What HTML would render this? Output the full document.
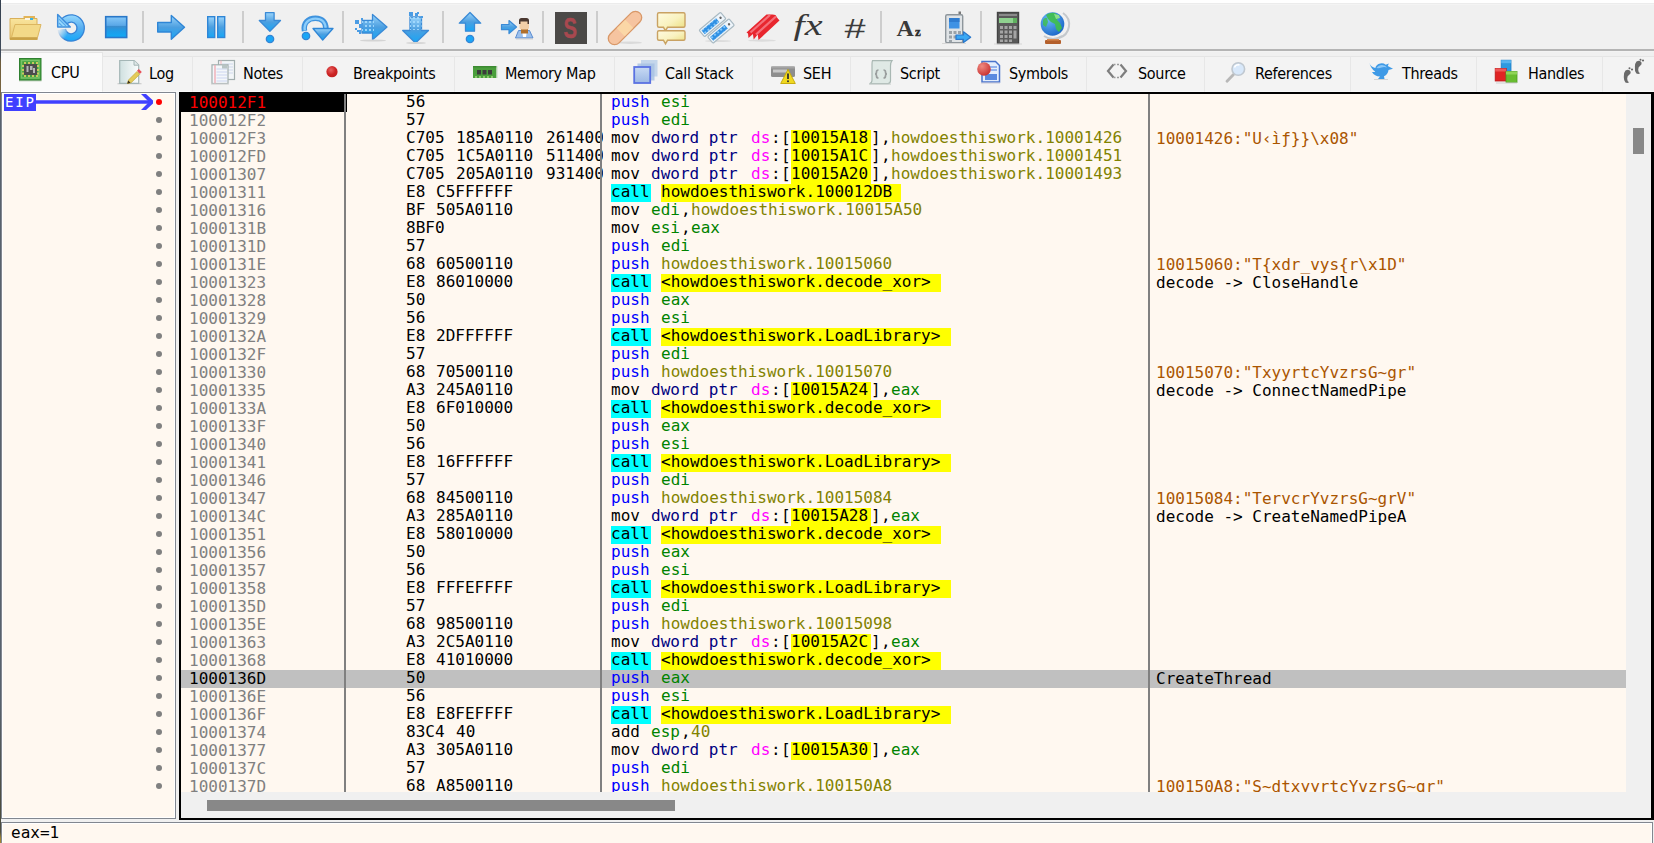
<!DOCTYPE html>
<html lang="en">
<head>
<meta charset="utf-8">
<title>x32dbg - CPU</title>
<style>
*{box-sizing:border-box;margin:0;padding:0}
html,body{width:1654px;height:843px;overflow:hidden;background:#f0f0f0}
body{position:relative;font-family:"DejaVu Sans Condensed","DejaVu Sans","Liberation Sans",sans-serif;font-size:16px;color:#000}
#win{position:absolute;left:0;top:0;width:1654px;height:843px;overflow:hidden;background:#f0f0f0}
#edge{position:absolute;left:0;top:0;width:1px;height:843px;background:linear-gradient(#34404f 0,#3f4b5a 55px,#6d5c3c 62px,#7a6640 95px,#58626e 104px,#58626e 700px,#4c4c3e 812px,#4c4c3e 832px,#a08432 838px,#a08432 100%)}
#topband{position:absolute;left:1px;top:0;width:1653px;height:5px;background:#fff;border-bottom:1px solid #f4f4f4}
#topband i{position:absolute;left:0;top:3px;width:100%;height:1px;background:#ececec}
#toolbar{position:absolute;left:1px;top:5px;width:1653px;height:44px;background:#f0f0f0}
#tbline{position:absolute;left:1px;top:49px;width:1653px;height:2px;background:#b4b4b4}
#tbline2{position:absolute;left:1px;top:51px;width:1653px;height:1px;background:#f3f3f3}
.ico{position:absolute;display:block;overflow:visible}
.sep{position:absolute;top:11px;width:2px;height:32px;background:#cfcfcf}
/* tabs */
#tabs{position:absolute;left:1px;top:52px;width:1653px;height:40px;background:#f0f0f0}
.tab{position:absolute;top:4px;height:36px;background:#f3f3f3;border-left:1px solid #e7e7e7;border-top:1px solid #e5e5e5;border-bottom:1px solid #f9f9f9}
.tab.cur{top:0;height:40px;background:#fafafa;border:0;border-top:1px solid #e5e5e5;border-right:1px solid #e5e5e5;border-bottom:1px solid #fff}
.tab span{position:absolute;top:7px;line-height:20px;white-space:nowrap;letter-spacing:-0.3px;font-size:16px}
.tab.cur span{top:10px}
/* side bar */
#side{position:absolute;left:1px;top:92px;width:175px;height:727px;border:1px solid #828790;background:#fff8f0;box-shadow:inset 0 0 0 1px #fff}
#eip{position:absolute;left:2px;top:1px;width:32px;height:17px;background:#4040ff;color:#fff;font:14px/17px "DejaVu Sans Mono","Liberation Mono",monospace;letter-spacing:1.8px;text-align:left;padding-left:1px;overflow:hidden;white-space:nowrap}
.dot{position:absolute;left:154px;width:6px;height:6px;border-radius:50%;background:#808080}
.dot.bp{background:#ff0000}
/* disassembly */
#dis{position:absolute;left:179px;top:92px;width:1475px;height:728px;background:#000}
#view{position:absolute;left:2px;top:2px;width:1445px;height:698px;background:#fff8f0;overflow:hidden;font:16px/18px "DejaVu Sans Mono","Liberation Mono",monospace}
.row{position:absolute;left:0;width:1445px;height:18px}
.row.sel{background:#c0c0c0}
.c{position:absolute;top:0;height:18px;overflow:hidden;white-space:pre}
.a{left:0;width:166px;padding-left:8px;color:#808080}
.a.cip{background:#000;color:#ff0000}
.a.asel{color:#000}
.b{left:166px;width:256px;padding-left:59px;line-height:16px}
.d{left:422px;width:548px;padding-left:8px;line-height:16px}
.m{left:970px;width:475px;padding-left:5px}
.t{display:inline-block;height:18px;vertical-align:top;white-space:pre;overflow:visible}
.w1{width:10px}.w2{width:20px}.w3{width:30px}.w4{width:40px}.w5{width:50px}.w6{width:60px}.w7{width:70px}.w8{width:80px}.w9{width:90px}.w10{width:100px}.w11{width:110px}.w12{width:120px}.w13{width:130px}.w14{width:140px}.w15{width:150px}.w16{width:160px}.w17{width:170px}.w18{width:180px}.w19{width:190px}.w20{width:200px}.w21{width:210px}.w22{width:220px}.w23{width:230px}.w24{width:240px}.w25{width:250px}.w26{width:260px}.w27{width:270px}.w28{width:280px}.w29{width:290px}.w30{width:300px}.w31{width:310px}
.k{color:#000}.pp{color:#0000ff}.rg{color:#008300}.ms{color:#000080}.sg{color:#ff00ff}.vl{color:#828200}
.ad{background:#ffff00;color:#000}.cl{background:#00ffff;color:#000}.ac{color:#aa5500}
.vs{position:absolute;top:0;width:2px;height:698px;background:#808080}
#vscroll{position:absolute;left:1447px;top:2px;width:25px;height:698px;background:#f0f0f0}
#vscroll i{position:absolute;left:7px;top:34px;width:11px;height:26px;background:#888}
#hscroll{position:absolute;left:2px;top:700px;width:1470px;height:26px;background:#f0f0f0}
#hscroll i{position:absolute;left:26px;top:8px;width:468px;height:11px;background:#888}
#info{position:absolute;left:1px;top:822px;width:1652px;height:30px;border:1px solid #828790;background:#fff8f0;box-shadow:inset 0 0 0 1px #fff;font:16px/18px "DejaVu Sans Mono","Liberation Mono",monospace}
#info span{position:absolute;left:9px;top:1px;white-space:pre}
</style>
</head>
<body>
<div id="win">
<div id="edge"></div>
<div id="topband"><i></i></div>
<div id="toolbar"></div>
<div id="tbline"></div><div id="tbline2"></div>
<div id="tabs">
<div class="tab cur" style="left:0px;width:102px"><span style="left:50px">CPU</span></div>
<div class="tab" style="left:101px;width:90px"><span style="left:46px">Log</span></div>
<div class="tab" style="left:191px;width:110px"><span style="left:50px">Notes</span></div>
<div class="tab" style="left:301px;width:152px"><span style="left:50px">Breakpoints</span></div>
<div class="tab" style="left:453px;width:160px"><span style="left:50px">Memory Map</span></div>
<div class="tab" style="left:613px;width:138px"><span style="left:50px">Call Stack</span></div>
<div class="tab" style="left:751px;width:98px"><span style="left:50px">SEH</span></div>
<div class="tab" style="left:849px;width:108px"><span style="left:49px">Script</span></div>
<div class="tab" style="left:957px;width:128px"><span style="left:50px">Symbols</span></div>
<div class="tab" style="left:1085px;width:118px"><span style="left:51px">Source</span></div>
<div class="tab" style="left:1203px;width:146px"><span style="left:50px">References</span></div>
<div class="tab" style="left:1349px;width:126px"><span style="left:51px">Threads</span></div>
<div class="tab" style="left:1475px;width:126px"><span style="left:51px">Handles</span></div>
<div class="tab" style="left:1601px;width:69px"></div>

</div>
<svg class="ico" style="left:0;top:0" width="1100" height="50" viewBox="0 0 1100 50">
<defs>
<linearGradient id="gb" x1="0" y1="0" x2="0" y2="1"><stop offset="0" stop-color="#9ad4fb"/><stop offset=".5" stop-color="#4c9fe0"/><stop offset="1" stop-color="#16a6f6"/></linearGradient>
<linearGradient id="gs" x1="0" y1="0" x2="0" y2="1"><stop offset="0" stop-color="#86c8f8"/><stop offset=".42" stop-color="#5aa8e8"/><stop offset=".45" stop-color="#3d8ccc"/><stop offset=".7" stop-color="#1d9ce8"/><stop offset="1" stop-color="#10aaf6"/></linearGradient>
<linearGradient id="gf" x1="0" y1="0" x2="0" y2="1"><stop offset="0" stop-color="#f9e49c"/><stop offset="1" stop-color="#e8c670"/></linearGradient>
<linearGradient id="gc" x1="0" y1="0" x2="1" y2="1"><stop offset="0" stop-color="#fffbe0"/><stop offset=".5" stop-color="#f9f2c0"/><stop offset="1" stop-color="#e9dc78"/></linearGradient>
<radialGradient id="gg" cx=".35" cy=".3" r=".8"><stop offset="0" stop-color="#6ab8f8"/><stop offset="1" stop-color="#1562c4"/></radialGradient>
<pattern id="pd" width="4" height="4" patternUnits="userSpaceOnUse"><rect x="1" y="1" width="2" height="2" fill="#a6dcff"/></pattern>
<linearGradient id="gr" gradientUnits="userSpaceOnUse" x1="0" y1="14" x2="0" y2="42"><stop offset="0" stop-color="#9adcff"/><stop offset=".5" stop-color="#58aef0"/><stop offset="1" stop-color="#10a8fa"/></linearGradient>
<linearGradient id="gfade" x1="0" y1="0" x2="1" y2=".6"><stop offset="0" stop-color="#f0f0f0" stop-opacity="1"/><stop offset=".35" stop-color="#f0f0f0" stop-opacity=".85"/><stop offset="1" stop-color="#f0f0f0" stop-opacity="0"/></linearGradient>
</defs>
<!-- folder -->
<g>
<path d="M23.5 16h11.500v3h-11.500z" fill="#e2b458"/>
<path d="M10 18.500h27v21h-27z" fill="url(#gf)" stroke="#d9b05a" stroke-width="1"/>
<path d="M25 18h5v2h-5z" fill="#fbf6e6"/><path d="M30 18h3v2h-3z" fill="#3eb4e4"/>
<path d="M15 24.500h26l-3.500 13h-26z" fill="#f3d988" stroke="#dcb660" stroke-width="1"/>
<path d="M10 37.500h27.500v2.300h-27.500z" fill="#c9a248"/>
</g>
<!-- restart -->
<g>
<path d="M64.500 21.200A9.500 9.500 0 1 1 61.800 29.500" fill="none" stroke="#3784d6" stroke-width="8.600"/>
<path d="M64.500 21.200A9.500 9.500 0 1 1 61.800 29.500" fill="none" stroke="url(#gr)" stroke-width="6"/>
<path d="M57.700 14.500v12.600h12.600z" fill="#9bdcff" stroke="#3f8edc" stroke-width="1.500" stroke-linejoin="round"/>
<path d="M59 19l7 7M59 23l3.500 3.500" stroke="#5aa8ea" stroke-width="1.200"/>
<rect x="55" y="28.200" width="12" height="12" fill="url(#gfade)"/>
</g>
<!-- stop -->
<rect x="105.700" y="16.700" width="21" height="20.800" fill="url(#gs)" stroke="#2a78c8" stroke-width="1.600"/>
<!-- run -->
<path d="M157.700 22.500h13.600v-7l13.200 11.700l-13.200 12v-7.200h-13.600z" fill="url(#gb)" stroke="#2f86d6" stroke-width="1.400" stroke-linejoin="round"/>
<!-- pause -->
<rect x="207.700" y="16.700" width="7" height="20.800" fill="url(#gb)" stroke="#2f86d6" stroke-width="1.400"/>
<rect x="217.700" y="16.700" width="7" height="20.800" fill="url(#gb)" stroke="#2f86d6" stroke-width="1.400"/>
<!-- step into -->
<path d="M265.500 12.700h8.600v7.800h6.400l-10.600 10.800l-10.600-10.800h6.200z" fill="url(#gb)" stroke="#3a8ad6" stroke-width="1.300" stroke-linejoin="round"/>
<circle cx="270" cy="39" r="3.700" fill="#1aa6f6" stroke="#3585d4" stroke-width="1.300"/>
<!-- step over -->
<path d="M304.500 31C303 23 308 18.300 315.500 18.300C322 18.300 326 22 326 29" fill="none" stroke="#3f93de" stroke-width="5.500"/>
<path d="M304.800 30.500C303.500 23.500 308.500 18.600 315.500 18.600C321.500 18.600 325.600 22 325.600 28.500" fill="none" stroke="#8ccdfa" stroke-width="2.400"/>
<path d="M313 28.500h20l-10.300 11.500z" fill="url(#gb)" stroke="#2f86d6" stroke-width="1.300" stroke-linejoin="round"/>
<circle cx="306" cy="36" r="3.700" fill="#1aa6f6" stroke="#3585d4" stroke-width="1.300"/>
<!-- trace into -->
<g>
<path d="M362 20.500h10.500v-6l14.500 12.500l-14.500 12.800v-6.800h-10.500z" fill="url(#gb)" stroke="#3a8ad6" stroke-width="1.300" stroke-linejoin="round"/>
<path d="M362 20.500h12v12.500h-12z" fill="url(#pd)" opacity=".85"/>
<path d="M355 20h4v4h-4zM359 24h4v4h-4zM357 30h4v2h-4zM355 28h2v2h-2zM359 32h2v2h-2zM361 18h2v2h-2z" fill="#4a9ce4"/>
<ellipse cx="373" cy="40.500" rx="13" ry="1" fill="#d4d4d4"/>
</g>
<!-- trace over -->
<g>
<path d="M410 17h11.500v13.500h7l-13 12.500l-12.800-12.500h7.300z" fill="url(#gb)" stroke="#3a8ad6" stroke-width="1.300" stroke-linejoin="round"/>
<path d="M410 17h11.500v13h-11.500z" fill="url(#pd)" opacity=".85"/>
<path d="M409 12h4v4h-4zM415 13h3v3h-3zM417 12h2v2h-2zM421 16h2v2h-2z" fill="#4a9ce4"/>
<ellipse cx="416" cy="43" rx="10" ry="1" fill="#d4d4d4"/>
</g>
<!-- run till return -->
<path d="M470 12.500l10.700 10.700h-6.200v8h-9v-8h-6.200z" fill="url(#gb)" stroke="#3a8ad6" stroke-width="1.300" stroke-linejoin="round"/>
<circle cx="470" cy="39" r="3.700" fill="#1aa6f6" stroke="#3585d4" stroke-width="1.300"/>
<!-- run to user code -->
<g>
<path d="M501.500 24.500h7.500v-4l7.500 6.500l-7.500 6.500v-3.800h-7.500z" fill="url(#gb)" stroke="#3a8ad6" stroke-width="1.200" stroke-linejoin="round"/>
<path d="M515.500 38l3-7.500h11l3.500 7.500z" fill="#9cc0ec" stroke="#5a8cd0" stroke-width="1"/>
<path d="M522 30h5l-1 7h-3z" fill="#fff"/>
<path d="M521 27.500h7v6h-7z" fill="#b0702c"/>
<rect x="519.500" y="21" width="9.500" height="8.500" rx="2" fill="#f2cfa8"/>
<path d="M519 24v-3.500q0-2.500 2.500-2.500h5q2.500 0 2.500 2.500v3.500h-1.500v-2.500h-7v2.500z" fill="#4a3830"/>
<rect x="516" y="38.500" width="17" height="1" fill="#d0d0d0"/>
</g>
<!-- scylla -->
<rect x="555" y="12" width="32" height="32" fill="#4b4947"/>
<text x="563.500" y="38" font-family="'Liberation Sans',sans-serif" font-weight="bold" font-size="30" fill="#a8484f" stroke="#a8484f" stroke-width=".5" textLength="13.500" lengthAdjust="spacingAndGlyphs">S</text>
<!-- patch -->
<ellipse cx="630" cy="42.700" rx="12" ry="1.200" fill="#dadada"/>
<g transform="rotate(-45 625 28)">
<rect x="604" y="21.700" width="42" height="12.600" rx="6.300" fill="#f6c4a0" stroke="#d99868" stroke-width="1.300"/>
<rect x="619" y="22.400" width="12" height="11.200" fill="#fbd7a6"/>
</g>
<!-- comments -->
<g>
<path d="M659 12.700h24.500q1.500 0 1.500 1.500v11.600q0 1.500-1.500 1.500h-16l-2 3.500l-2-3.500h-4.500q-1.500 0-1.500-1.500v-11.600q0-1.500 1.500-1.500z" fill="url(#gc)" stroke="#c9a263" stroke-width="1.400"/>
<path d="M659 30.700h24.500q1.500 0 1.500 1.500v6.600q0 1.500-1.500 1.500h-16l-2 3.500l-2-3.500h-4.500q-1.500 0-1.500-1.500v-6.600q0-1.500 1.500-1.500z" fill="url(#gc)" stroke="#c9a263" stroke-width="1.400"/>
</g>
<!-- labels -->
<g>
<ellipse cx="718" cy="41" rx="13" ry="1.100" fill="#dcdcdc"/>
<g transform="rotate(-40 712.5 24.5)"><rect x="698.5" y="20.2" width="28" height="8.600" rx="1.200" fill="#eef5fb" stroke="#a9bac3" stroke-width="1.200"/><rect x="700.3" y="22" width="19" height="5" fill="#2f90e4"/><rect x="700.3" y="22" width="19" height="5" fill="url(#pd)" opacity=".7"/><circle cx="723" cy="24.5" r="1.200" fill="#666"/></g>
<g transform="rotate(-40 721 31)"><rect x="707" y="26.7" width="28" height="8.600" rx="1.200" fill="#eef5fb" stroke="#a9bac3" stroke-width="1.200"/><rect x="708.8" y="28.5" width="19" height="5" fill="#2f90e4"/><rect x="708.8" y="28.5" width="19" height="5" fill="url(#pd)" opacity=".7"/><circle cx="731.5" cy="31" r="1.200" fill="#666"/></g>
</g>
<!-- bookmarks -->
<g>
<ellipse cx="762" cy="40.500" rx="14" ry="1.200" fill="#dcdcdc"/>
<path d="M746.500 32.500l20-18h6l3 .5l1.500 2.500l2.500 3l-21 19.500l-.8-5.500l-4 5l-.8-5.500l-4.400 4l-.5-4.500z" fill="#e8262e"/>
<path d="M750.500 32.500l19.500-17.500M756 34.500l20-18" stroke="#f4707a" stroke-width="2.200"/>
</g>
<!-- fx -->
<text x="793.500" y="34.500" font-family="'Liberation Serif',serif" font-style="italic" font-size="30" fill="#383838" textLength="29" lengthAdjust="spacingAndGlyphs">fx</text>
<!-- hash -->
<text x="844" y="38" font-family="'Liberation Sans',sans-serif" font-style="italic" font-size="28" fill="#3c3c3c" textLength="21" lengthAdjust="spacingAndGlyphs">#</text>
<!-- Az -->
<text x="896.500" y="36" font-family="'Liberation Serif',serif" font-weight="bold" font-size="24" fill="#3a3a3a">A</text>
<text x="915" y="36" font-family="'Liberation Serif',serif" font-weight="bold" font-size="13" fill="#2a2a2a" stroke="#2a2a2a" stroke-width=".4">z</text>
<!-- phone -->
<g>
<rect x="958.500" y="11.500" width="2.500" height="4" fill="#777"/>
<rect x="945.700" y="14.700" width="17" height="28" rx="1.500" fill="#dfe3e6" stroke="#8e969c" stroke-width="1.400"/>
<rect x="949" y="18" width="10.500" height="10.500" fill="#3f92e4"/><rect x="949" y="18" width="10.500" height="4" fill="#2f7cd0"/>
<path d="M949 31h3v3h-3zM953.500 31h3v3h-3zM958 31h3v3h-3zM949 35.500h3v3h-3zM953.500 35.500h3v3h-3zM949 40h3v2h-3z" fill="#9aa2a8"/>
<path d="M956 35h7.500v-3.200l7.200 5.400l-7.200 5.400v-3.200h-7.500z" fill="#3aa8f4" stroke="#2b78cc" stroke-width="1.200" stroke-linejoin="round"/>
<rect x="942" y="43" width="24" height="1" fill="#d6d6d6"/>
</g>
<!-- calculator -->
<g>
<rect x="997.500" y="12.500" width="21" height="31" fill="#5a5a5a" stroke="#444" stroke-width="1.400"/>
<rect x="999" y="14" width="18" height="2" fill="#8a8a8a"/>
<rect x="999" y="18" width="18" height="5" fill="#8fd18f"/><rect x="1013" y="18" width="4" height="5" fill="#5fb05f"/>
<path d="M1000 26h3v3h-3zM1004.500 26h3v3h-3zM1009 26h3v3h-3zM1013.500 26h3v3h-3zM1000 30.500h3v3h-3zM1004.500 30.500h3v3h-3zM1009 30.500h3v3h-3zM1013.500 30.500h3v8h-3zM1000 35h3v3h-3zM1004.500 35h3v3h-3zM1009 35h3v3h-3zM1000 39.500h3v2.500h-3zM1004.500 39.500h3v2.500h-3zM1009 39.500h3v2.500h-3z" fill="#a4a4a4"/>
<rect x="994" y="43.500" width="28" height="1" fill="#d6d6d6"/>
</g>
<!-- globe -->
<g>
<path d="M1063 13a14 14 0 0 1 -4 25" fill="none" stroke="#c4c8cc" stroke-width="2"/>
<path d="M1044 36q9 6 18 0" fill="none" stroke="#c4c8cc" stroke-width="2"/>
<circle cx="1052.500" cy="24" r="11.800" fill="url(#gg)"/>
<path d="M1046 15q4-3 9-2l4 3l-2 4l3 3l2 5l-3 4l-3-3l-1-5l-4-2l-3-3z" fill="#3fc04a" opacity=".9"/>
<path d="M1054 14l5 1l1 3l-4 1z" fill="#8ce08c"/>
<path d="M1043 20q2-3 4-2l1 4l-2 5l-3-2z" fill="#3fc04a" opacity=".8"/>
<rect x="1045" y="40" width="16" height="4" rx="1" fill="#b4602c"/>
<rect x="1047" y="39" width="12" height="1.500" fill="#d88a50"/>
</g>
<!-- separators -->
<path d="M143 11v32M243 11v32M343 11v32M443 11v32M543 11v32M597 11v32M881 11v32M981 11v32" stroke="#cdcdcd" stroke-width="2"/>
</svg>
<svg class="ico" style="left:0;top:52px" width="1654" height="40" viewBox="0 52 1654 40">
<defs>
<linearGradient id="tg1" x1="0" y1="0" x2="1" y2="0"><stop offset="0" stop-color="#cfe0e0"/><stop offset="1" stop-color="#fbfdfd"/></linearGradient>
<radialGradient id="tg2" cx=".4" cy=".35" r=".7"><stop offset="0" stop-color="#e86060"/><stop offset=".6" stop-color="#cc2424"/><stop offset="1" stop-color="#c02020"/></radialGradient>
<linearGradient id="tg3" x1="0" y1="0" x2="0" y2="1"><stop offset="0" stop-color="#c8daf4"/><stop offset="1" stop-color="#9cb8e4"/></linearGradient>
<radialGradient id="tg4" cx=".35" cy=".3" r=".75"><stop offset="0" stop-color="#f08a80"/><stop offset="1" stop-color="#c83030"/></radialGradient>
</defs>
<!-- CPU -->
<g>
<rect x="19" y="80" width="22.500" height="1.500" fill="#c9d6c6"/>
<rect x="19.500" y="58.500" width="21.500" height="21.500" fill="#45a03e" stroke="#2f8030" stroke-width="1"/>
<rect x="21.500" y="60.500" width="17.500" height="17.500" fill="none" stroke="#78c468" stroke-width="1.500"/>
<path d="M24 62h2v2h-2zM28 62h2v2h-2zM32 62h2v2h-2zM36 62h2v2h-2zM24 75h2v2h-2zM28 75h2v2h-2zM32 75h2v2h-2zM36 75h2v2h-2zM22 65h2v2h-2zM22 69h2v2h-2zM22 72.500h2v2h-2zM37 65h2v2h-2zM37 69h2v2h-2zM37 72.500h2v2h-2z" fill="#c8c860"/>
<rect x="24" y="64" width="13" height="11" fill="#4c4c4c"/>
<path d="M26.500 66h2v6h-2zM30 66h2.500v4h-2.500zM33 68h2v5h-2z" fill="#b8b8b8"/>
</g>
<!-- Log -->
<g>
<rect x="117.500" y="83" width="24" height="1.300" fill="#d0d0d0"/>
<path d="M119.700 60.500h14.500l4.500 4.500v18.300h-19z" fill="url(#tg1)" stroke="#a4b6b6" stroke-width="1.200"/>
<path d="M134 60.500v4.700h4.700" fill="#dfe8e8" stroke="#a4b6b6" stroke-width="1"/>
<path d="M127.500 83.500l1-3.500l8.500-8.500l2.700 2.700l-8.700 8.600z" fill="#e4cc58" stroke="#c8ac40" stroke-width=".8"/>
<path d="M127.300 83.700l.9-3.200l2.300 2.300z" fill="#3a3020"/>
<path d="M137 70.800l1.800-1.800l3 3l-1.800 1.800z" fill="#e85058"/>
</g>
<!-- Notes -->
<g>
<rect x="218.500" y="60.500" width="16" height="19" fill="#f2f6f8" stroke="#a2aeae" stroke-width="1.200"/>
<path d="M221 60.500v19" stroke="#f0b0b8" stroke-width="1"/>
<path d="M222 64h11M222 67h11M222 70h11M222 73h11" stroke="#d0d8ec" stroke-width="1"/>
<rect x="212" y="64.800" width="16" height="18.700" fill="#f4f7fa" stroke="#a2aeae" stroke-width="1.200"/>
<path d="M215 65v18.500" stroke="#f0a8b0" stroke-width="1.300"/>
<path d="M216.500 69h10.500M216.500 72h10.500M216.500 75h10.500M216.500 78h10.500M216.500 81h10.500" stroke="#ccd6f0" stroke-width="1.200"/>
<path d="M222 64.500h5v4h-5z" fill="#b8c4c4"/>
<rect x="211" y="83.500" width="18" height="1" fill="#d4d4d4"/>
</g>
<!-- Breakpoints -->
<circle cx="332" cy="71.700" r="5.600" fill="url(#tg2)"/>
<!-- Memory Map -->
<g>
<rect x="473" y="66" width="23.500" height="12" fill="#4a9e3c"/>
<rect x="473" y="66" width="23.500" height="1.500" fill="#3c8a32"/>
<path d="M477 70h4v4.500h-4zM482.500 70h4v4.500h-4zM488 70h4v4.500h-4z" fill="#3c3c3c"/>
<path d="M475 76h2v2h-2zM479 76h2v2h-2zM483 76h2v2h-2zM487 76h2v2h-2zM491 76h2v2h-2z" fill="#8cc86c"/>
<rect x="496.500" y="66" width="1" height="12" fill="#c4d8c0"/>
</g>
<!-- Call Stack -->
<g>
<rect x="641" y="60" width="16.500" height="16.500" fill="#b4cce8" opacity=".75"/>
<rect x="637.500" y="63.500" width="17" height="17" fill="#a8c2e4" opacity=".85"/>
<rect x="634.200" y="67" width="16" height="16" fill="url(#tg3)" stroke="#5a72e2" stroke-width="1.800"/>
</g>
<!-- SEH -->
<g>
<rect x="771" y="66.500" width="24" height="10.500" rx="1.500" fill="#8e8e8e"/>
<rect x="773" y="69.500" width="14" height="3" fill="#c8c8c8"/>
<rect x="771" y="66.500" width="24" height="2" fill="#a4a4a4"/>
<path d="M788 69.500l7.300 14h-14.600z" fill="#f0d820" stroke="#c8ac10" stroke-width="1"/>
<path d="M788 73.500v5.500" stroke="#303030" stroke-width="1.800"/><circle cx="788" cy="81.300" r="1" fill="#303030"/>
</g>
<!-- Script -->
<g>
<path d="M872.500 60.700h19.500q-1.500 2-1.500 5v15q0 2.500-2.500 3h-18.500q2.500-1 2.500-3.500v-16q0-2.500.5-3.500z" fill="#dfe9e5" stroke="#a9b8b3" stroke-width="1.200"/>
<path d="M878.500 70q-2 0-2 2t-1.500 2q1.500 0 1.500 2t2 2M883.500 70q2 0 2 2t1.500 2q-1.500 0-1.500 2t-2 2" fill="none" stroke="#9a9e9e" stroke-width="1.700"/>
<rect x="869" y="83.600" width="22" height="1" fill="#c8d0cc"/>
</g>
<!-- Symbols -->
<g>
<path d="M982 61.500h13.500l4 4v16.500h-17.500z" fill="#e4eefc" stroke="#4a74cc" stroke-width="1.500"/>
<path d="M985 74h12v6h-12z" fill="#5a8ae0"/><path d="M990 67h7M990 70h7" stroke="#7aa0e8" stroke-width="1.400"/>
<circle cx="984" cy="69" r="6.800" fill="url(#tg4)"/>
<rect x="981" y="82.500" width="19" height="1" fill="#c8c8d8"/>
</g>
<!-- Source -->
<path d="M1113.500 64.500l-5.500 6.500l5.500 6.500M1120.500 64.500l5.500 6.500l-5.500 6.500" fill="none" stroke="#7e7e7e" stroke-width="2.200" stroke-linejoin="miter"/>
<path d="M1113.500 64.500h7M1113.500 77.500h7" stroke="#9a9a9a" stroke-width="1.600" stroke-dasharray="2 1.500"/>
<!-- References -->
<g>
<path d="M1233.500 74.500l-6.500 6.800" stroke="#b8b8b8" stroke-width="2.800" stroke-linecap="round"/>
<circle cx="1238.300" cy="69" r="6.300" fill="#d8e8fa" stroke="#c0c8d0" stroke-width="1.600"/>
<path d="M1234.500 67.500a4 4 0 0 1 5-2.500" fill="none" stroke="#fff" stroke-width="1.500"/>
</g>
<!-- Threads -->
<g>
<path d="M1369.300 62.800q1.500 4.500 6 5.200q1-3.700 5-4.500q3-.6 5.500 1.300l3-1.300l-1 2.500l5.200 2.800l-4.500 1.200q-.5 4.500-4.500 6.200l.5 2.800h-6.500l2-2.400q-5.500-.3-8-4.600q2 .3 3.300-.5q-4-2-6-8.700z" fill="#3f9ae6"/>
<path d="M1376.500 68q2-3 5.500-3t5 2.500q-3-1-5.500 0t-5 .5z" fill="#8cc8f8"/>
<rect x="1374" y="79" width="14" height="1" fill="#d4d4d4"/>
</g>
<!-- Handles -->
<g>
<rect x="1501.200" y="60.200" width="9.800" height="11" fill="#2e9ae0" stroke="#1c7cc4" stroke-width=".8"/>
<rect x="1501.200" y="60.200" width="9.800" height="3" fill="#58b4ee"/>
<rect x="1495.200" y="68.500" width="11" height="12.500" fill="#e02424" stroke="#b81818" stroke-width=".8"/>
<rect x="1495.200" y="68.500" width="11" height="3" fill="#ee5858"/>
<rect x="1506" y="71.500" width="11" height="11" fill="#68bc30" stroke="#4c9c20" stroke-width=".8"/>
<rect x="1506" y="71.500" width="11" height="3" fill="#90d458"/>
<rect x="1496" y="82.500" width="21" height="1" fill="#d0d0d0"/>
</g>
<!-- footprints -->
<g fill="#5c5c5c" opacity=".9">
<path d="M1625.500 70.500q3.500-2 5 1q.7 2-1.300 3.200q-2 1.300-2 3.800q.3 3.700 2 3.500q-1.500 1.500-3.800.5q-2-2.500-1.500-7q.2-3.500 1.600-5z"/>
<path d="M1636.500 61.500q3.500-2 5 1q.7 2-1.300 3.200q-2 1.300-2 3.800q.3 3.700 2 3.500q-1.500 1.500-3.800.5q-2-2.500-1.500-7q.2-3.500 1.600-5z"/>
<circle cx="1632" cy="69.500" r="1.100"/><circle cx="1629.500" cy="68.300" r="1"/><circle cx="1643" cy="60.500" r="1.100"/><circle cx="1640.500" cy="59.800" r="1"/>
</g>
</svg>

<div id="side">
<div id="eip">EIP</div>
<svg class="ico" style="left:34px;top:0;width:122px;height:20px" viewBox="0 0 122 20"><path d="M0 9H115" stroke="#4040ff" stroke-width="3.6" fill="none"/><path d="M110 1L117 7.5V10.5L110 17H105L113 9L105 1Z" fill="#4040ff"/></svg>
<i class="dot bp" style="top:6px"></i>
<i class="dot" style="top:24px"></i>
<i class="dot" style="top:42px"></i>
<i class="dot" style="top:60px"></i>
<i class="dot" style="top:78px"></i>
<i class="dot" style="top:96px"></i>
<i class="dot" style="top:114px"></i>
<i class="dot" style="top:132px"></i>
<i class="dot" style="top:150px"></i>
<i class="dot" style="top:168px"></i>
<i class="dot" style="top:186px"></i>
<i class="dot" style="top:204px"></i>
<i class="dot" style="top:222px"></i>
<i class="dot" style="top:240px"></i>
<i class="dot" style="top:258px"></i>
<i class="dot" style="top:276px"></i>
<i class="dot" style="top:294px"></i>
<i class="dot" style="top:312px"></i>
<i class="dot" style="top:330px"></i>
<i class="dot" style="top:348px"></i>
<i class="dot" style="top:366px"></i>
<i class="dot" style="top:384px"></i>
<i class="dot" style="top:402px"></i>
<i class="dot" style="top:420px"></i>
<i class="dot" style="top:438px"></i>
<i class="dot" style="top:456px"></i>
<i class="dot" style="top:474px"></i>
<i class="dot" style="top:492px"></i>
<i class="dot" style="top:510px"></i>
<i class="dot" style="top:528px"></i>
<i class="dot" style="top:546px"></i>
<i class="dot" style="top:564px"></i>
<i class="dot" style="top:582px"></i>
<i class="dot" style="top:600px"></i>
<i class="dot" style="top:618px"></i>
<i class="dot" style="top:636px"></i>
<i class="dot" style="top:654px"></i>
<i class="dot" style="top:672px"></i>
<i class="dot" style="top:690px"></i>
</div>
<div id="dis">
<div id="view">
<div class="row" style="top:0px"><div class="c a cip">100012F1</div><div class="c b"><span class="t k w2">56</span></div><div class="c d"><span class="t pp w4">push</span><span class="t w1"> </span><span class="t rg w3">esi</span></div><div class="c m"></div></div>
<div class="row" style="top:18px"><div class="c a">100012F2</div><div class="c b"><span class="t k w2">57</span></div><div class="c d"><span class="t pp w4">push</span><span class="t w1"> </span><span class="t rg w3">edi</span></div><div class="c m"></div></div>
<div class="row" style="top:36px"><div class="c a">100012F3</div><div class="c b"><span class="t k w4">C705</span><span class="t w1"> </span><span class="t k w8">185A0110</span><span class="t w1"> </span><span class="t k w8">26140010</span></div><div class="c d"><span class="t k w3">mov</span><span class="t w1"> </span><span class="t ms w9">dword ptr</span><span class="t w1"> </span><span class="t sg w2">ds</span><span class="t k w1">:</span><span class="t k w1">[</span><span class="t ad w8">10015A18</span><span class="t k w1">]</span><span class="t k w1">,</span><span class="t vl w24">howdoesthiswork.10001426</span></div><div class="c m"><span class="ac">10001426:"U‹ìƒ}}\x08"</span></div></div>
<div class="row" style="top:54px"><div class="c a">100012FD</div><div class="c b"><span class="t k w4">C705</span><span class="t w1"> </span><span class="t k w8">1C5A0110</span><span class="t w1"> </span><span class="t k w8">51140010</span></div><div class="c d"><span class="t k w3">mov</span><span class="t w1"> </span><span class="t ms w9">dword ptr</span><span class="t w1"> </span><span class="t sg w2">ds</span><span class="t k w1">:</span><span class="t k w1">[</span><span class="t ad w8">10015A1C</span><span class="t k w1">]</span><span class="t k w1">,</span><span class="t vl w24">howdoesthiswork.10001451</span></div><div class="c m"></div></div>
<div class="row" style="top:72px"><div class="c a">10001307</div><div class="c b"><span class="t k w4">C705</span><span class="t w1"> </span><span class="t k w8">205A0110</span><span class="t w1"> </span><span class="t k w8">93140010</span></div><div class="c d"><span class="t k w3">mov</span><span class="t w1"> </span><span class="t ms w9">dword ptr</span><span class="t w1"> </span><span class="t sg w2">ds</span><span class="t k w1">:</span><span class="t k w1">[</span><span class="t ad w8">10015A20</span><span class="t k w1">]</span><span class="t k w1">,</span><span class="t vl w24">howdoesthiswork.10001493</span></div><div class="c m"></div></div>
<div class="row" style="top:90px"><div class="c a">10001311</div><div class="c b"><span class="t k w2">E8</span><span class="t w1"> </span><span class="t k w8">C5FFFFFF</span></div><div class="c d"><span class="t cl w4">call</span><span class="t w1"> </span><span class="t ad w24">howdoesthiswork.100012DB</span></div><div class="c m"></div></div>
<div class="row" style="top:108px"><div class="c a">10001316</div><div class="c b"><span class="t k w2">BF</span><span class="t w1"> </span><span class="t k w8">505A0110</span></div><div class="c d"><span class="t k w3">mov</span><span class="t w1"> </span><span class="t rg w3">edi</span><span class="t k w1">,</span><span class="t vl w24">howdoesthiswork.10015A50</span></div><div class="c m"></div></div>
<div class="row" style="top:126px"><div class="c a">1000131B</div><div class="c b"><span class="t k w4">8BF0</span></div><div class="c d"><span class="t k w3">mov</span><span class="t w1"> </span><span class="t rg w3">esi</span><span class="t k w1">,</span><span class="t rg w3">eax</span></div><div class="c m"></div></div>
<div class="row" style="top:144px"><div class="c a">1000131D</div><div class="c b"><span class="t k w2">57</span></div><div class="c d"><span class="t pp w4">push</span><span class="t w1"> </span><span class="t rg w3">edi</span></div><div class="c m"></div></div>
<div class="row" style="top:162px"><div class="c a">1000131E</div><div class="c b"><span class="t k w2">68</span><span class="t w1"> </span><span class="t k w8">60500110</span></div><div class="c d"><span class="t pp w4">push</span><span class="t w1"> </span><span class="t vl w24">howdoesthiswork.10015060</span></div><div class="c m"><span class="ac">10015060:"T{xdr_vys{r\x1D"</span></div></div>
<div class="row" style="top:180px"><div class="c a">10001323</div><div class="c b"><span class="t k w2">E8</span><span class="t w1"> </span><span class="t k w8">86010000</span></div><div class="c d"><span class="t cl w4">call</span><span class="t w1"> </span><span class="t ad w28">&lt;howdoesthiswork.decode_xor&gt;</span></div><div class="c m"><span class="k">decode -&gt; CloseHandle</span></div></div>
<div class="row" style="top:198px"><div class="c a">10001328</div><div class="c b"><span class="t k w2">50</span></div><div class="c d"><span class="t pp w4">push</span><span class="t w1"> </span><span class="t rg w3">eax</span></div><div class="c m"></div></div>
<div class="row" style="top:216px"><div class="c a">10001329</div><div class="c b"><span class="t k w2">56</span></div><div class="c d"><span class="t pp w4">push</span><span class="t w1"> </span><span class="t rg w3">esi</span></div><div class="c m"></div></div>
<div class="row" style="top:234px"><div class="c a">1000132A</div><div class="c b"><span class="t k w2">E8</span><span class="t w1"> </span><span class="t k w8">2DFFFFFF</span></div><div class="c d"><span class="t cl w4">call</span><span class="t w1"> </span><span class="t ad w29">&lt;howdoesthiswork.LoadLibrary&gt;</span></div><div class="c m"></div></div>
<div class="row" style="top:252px"><div class="c a">1000132F</div><div class="c b"><span class="t k w2">57</span></div><div class="c d"><span class="t pp w4">push</span><span class="t w1"> </span><span class="t rg w3">edi</span></div><div class="c m"></div></div>
<div class="row" style="top:270px"><div class="c a">10001330</div><div class="c b"><span class="t k w2">68</span><span class="t w1"> </span><span class="t k w8">70500110</span></div><div class="c d"><span class="t pp w4">push</span><span class="t w1"> </span><span class="t vl w24">howdoesthiswork.10015070</span></div><div class="c m"><span class="ac">10015070:"TxyyrtcYvzrsG~gr"</span></div></div>
<div class="row" style="top:288px"><div class="c a">10001335</div><div class="c b"><span class="t k w2">A3</span><span class="t w1"> </span><span class="t k w8">245A0110</span></div><div class="c d"><span class="t k w3">mov</span><span class="t w1"> </span><span class="t ms w9">dword ptr</span><span class="t w1"> </span><span class="t sg w2">ds</span><span class="t k w1">:</span><span class="t k w1">[</span><span class="t ad w8">10015A24</span><span class="t k w1">]</span><span class="t k w1">,</span><span class="t rg w3">eax</span></div><div class="c m"><span class="k">decode -&gt; ConnectNamedPipe</span></div></div>
<div class="row" style="top:306px"><div class="c a">1000133A</div><div class="c b"><span class="t k w2">E8</span><span class="t w1"> </span><span class="t k w8">6F010000</span></div><div class="c d"><span class="t cl w4">call</span><span class="t w1"> </span><span class="t ad w28">&lt;howdoesthiswork.decode_xor&gt;</span></div><div class="c m"></div></div>
<div class="row" style="top:324px"><div class="c a">1000133F</div><div class="c b"><span class="t k w2">50</span></div><div class="c d"><span class="t pp w4">push</span><span class="t w1"> </span><span class="t rg w3">eax</span></div><div class="c m"></div></div>
<div class="row" style="top:342px"><div class="c a">10001340</div><div class="c b"><span class="t k w2">56</span></div><div class="c d"><span class="t pp w4">push</span><span class="t w1"> </span><span class="t rg w3">esi</span></div><div class="c m"></div></div>
<div class="row" style="top:360px"><div class="c a">10001341</div><div class="c b"><span class="t k w2">E8</span><span class="t w1"> </span><span class="t k w8">16FFFFFF</span></div><div class="c d"><span class="t cl w4">call</span><span class="t w1"> </span><span class="t ad w29">&lt;howdoesthiswork.LoadLibrary&gt;</span></div><div class="c m"></div></div>
<div class="row" style="top:378px"><div class="c a">10001346</div><div class="c b"><span class="t k w2">57</span></div><div class="c d"><span class="t pp w4">push</span><span class="t w1"> </span><span class="t rg w3">edi</span></div><div class="c m"></div></div>
<div class="row" style="top:396px"><div class="c a">10001347</div><div class="c b"><span class="t k w2">68</span><span class="t w1"> </span><span class="t k w8">84500110</span></div><div class="c d"><span class="t pp w4">push</span><span class="t w1"> </span><span class="t vl w24">howdoesthiswork.10015084</span></div><div class="c m"><span class="ac">10015084:"TervcrYvzrsG~grV"</span></div></div>
<div class="row" style="top:414px"><div class="c a">1000134C</div><div class="c b"><span class="t k w2">A3</span><span class="t w1"> </span><span class="t k w8">285A0110</span></div><div class="c d"><span class="t k w3">mov</span><span class="t w1"> </span><span class="t ms w9">dword ptr</span><span class="t w1"> </span><span class="t sg w2">ds</span><span class="t k w1">:</span><span class="t k w1">[</span><span class="t ad w8">10015A28</span><span class="t k w1">]</span><span class="t k w1">,</span><span class="t rg w3">eax</span></div><div class="c m"><span class="k">decode -&gt; CreateNamedPipeA</span></div></div>
<div class="row" style="top:432px"><div class="c a">10001351</div><div class="c b"><span class="t k w2">E8</span><span class="t w1"> </span><span class="t k w8">58010000</span></div><div class="c d"><span class="t cl w4">call</span><span class="t w1"> </span><span class="t ad w28">&lt;howdoesthiswork.decode_xor&gt;</span></div><div class="c m"></div></div>
<div class="row" style="top:450px"><div class="c a">10001356</div><div class="c b"><span class="t k w2">50</span></div><div class="c d"><span class="t pp w4">push</span><span class="t w1"> </span><span class="t rg w3">eax</span></div><div class="c m"></div></div>
<div class="row" style="top:468px"><div class="c a">10001357</div><div class="c b"><span class="t k w2">56</span></div><div class="c d"><span class="t pp w4">push</span><span class="t w1"> </span><span class="t rg w3">esi</span></div><div class="c m"></div></div>
<div class="row" style="top:486px"><div class="c a">10001358</div><div class="c b"><span class="t k w2">E8</span><span class="t w1"> </span><span class="t k w8">FFFEFFFF</span></div><div class="c d"><span class="t cl w4">call</span><span class="t w1"> </span><span class="t ad w29">&lt;howdoesthiswork.LoadLibrary&gt;</span></div><div class="c m"></div></div>
<div class="row" style="top:504px"><div class="c a">1000135D</div><div class="c b"><span class="t k w2">57</span></div><div class="c d"><span class="t pp w4">push</span><span class="t w1"> </span><span class="t rg w3">edi</span></div><div class="c m"></div></div>
<div class="row" style="top:522px"><div class="c a">1000135E</div><div class="c b"><span class="t k w2">68</span><span class="t w1"> </span><span class="t k w8">98500110</span></div><div class="c d"><span class="t pp w4">push</span><span class="t w1"> </span><span class="t vl w24">howdoesthiswork.10015098</span></div><div class="c m"></div></div>
<div class="row" style="top:540px"><div class="c a">10001363</div><div class="c b"><span class="t k w2">A3</span><span class="t w1"> </span><span class="t k w8">2C5A0110</span></div><div class="c d"><span class="t k w3">mov</span><span class="t w1"> </span><span class="t ms w9">dword ptr</span><span class="t w1"> </span><span class="t sg w2">ds</span><span class="t k w1">:</span><span class="t k w1">[</span><span class="t ad w8">10015A2C</span><span class="t k w1">]</span><span class="t k w1">,</span><span class="t rg w3">eax</span></div><div class="c m"></div></div>
<div class="row" style="top:558px"><div class="c a">10001368</div><div class="c b"><span class="t k w2">E8</span><span class="t w1"> </span><span class="t k w8">41010000</span></div><div class="c d"><span class="t cl w4">call</span><span class="t w1"> </span><span class="t ad w28">&lt;howdoesthiswork.decode_xor&gt;</span></div><div class="c m"></div></div>
<div class="row sel" style="top:576px"><div class="c a asel">1000136D</div><div class="c b"><span class="t k w2">50</span></div><div class="c d"><span class="t pp w4">push</span><span class="t w1"> </span><span class="t rg w3">eax</span></div><div class="c m"><span class="k">CreateThread</span></div></div>
<div class="row" style="top:594px"><div class="c a">1000136E</div><div class="c b"><span class="t k w2">56</span></div><div class="c d"><span class="t pp w4">push</span><span class="t w1"> </span><span class="t rg w3">esi</span></div><div class="c m"></div></div>
<div class="row" style="top:612px"><div class="c a">1000136F</div><div class="c b"><span class="t k w2">E8</span><span class="t w1"> </span><span class="t k w8">E8FEFFFF</span></div><div class="c d"><span class="t cl w4">call</span><span class="t w1"> </span><span class="t ad w29">&lt;howdoesthiswork.LoadLibrary&gt;</span></div><div class="c m"></div></div>
<div class="row" style="top:630px"><div class="c a">10001374</div><div class="c b"><span class="t k w4">83C4</span><span class="t w1"> </span><span class="t k w2">40</span></div><div class="c d"><span class="t k w3">add</span><span class="t w1"> </span><span class="t rg w3">esp</span><span class="t k w1">,</span><span class="t vl w2">40</span></div><div class="c m"></div></div>
<div class="row" style="top:648px"><div class="c a">10001377</div><div class="c b"><span class="t k w2">A3</span><span class="t w1"> </span><span class="t k w8">305A0110</span></div><div class="c d"><span class="t k w3">mov</span><span class="t w1"> </span><span class="t ms w9">dword ptr</span><span class="t w1"> </span><span class="t sg w2">ds</span><span class="t k w1">:</span><span class="t k w1">[</span><span class="t ad w8">10015A30</span><span class="t k w1">]</span><span class="t k w1">,</span><span class="t rg w3">eax</span></div><div class="c m"></div></div>
<div class="row" style="top:666px"><div class="c a">1000137C</div><div class="c b"><span class="t k w2">57</span></div><div class="c d"><span class="t pp w4">push</span><span class="t w1"> </span><span class="t rg w3">edi</span></div><div class="c m"></div></div>
<div class="row" style="top:684px"><div class="c a">1000137D</div><div class="c b"><span class="t k w2">68</span><span class="t w1"> </span><span class="t k w8">A8500110</span></div><div class="c d"><span class="t pp w4">push</span><span class="t w1"> </span><span class="t vl w24">howdoesthiswork.100150A8</span></div><div class="c m"><span class="ac">100150A8:"S~dtxyyrtcYvzrsG~gr"</span></div></div>
<div class="vs" style="left:163px"></div>
<div class="vs" style="left:419px"></div>
<div class="vs" style="left:967px"></div>
</div>
<div id="vscroll"><i></i></div>
<div id="hscroll"><i></i></div>
</div>
<div id="info"><span>eax=1</span></div>
</div>
</body>
</html>
